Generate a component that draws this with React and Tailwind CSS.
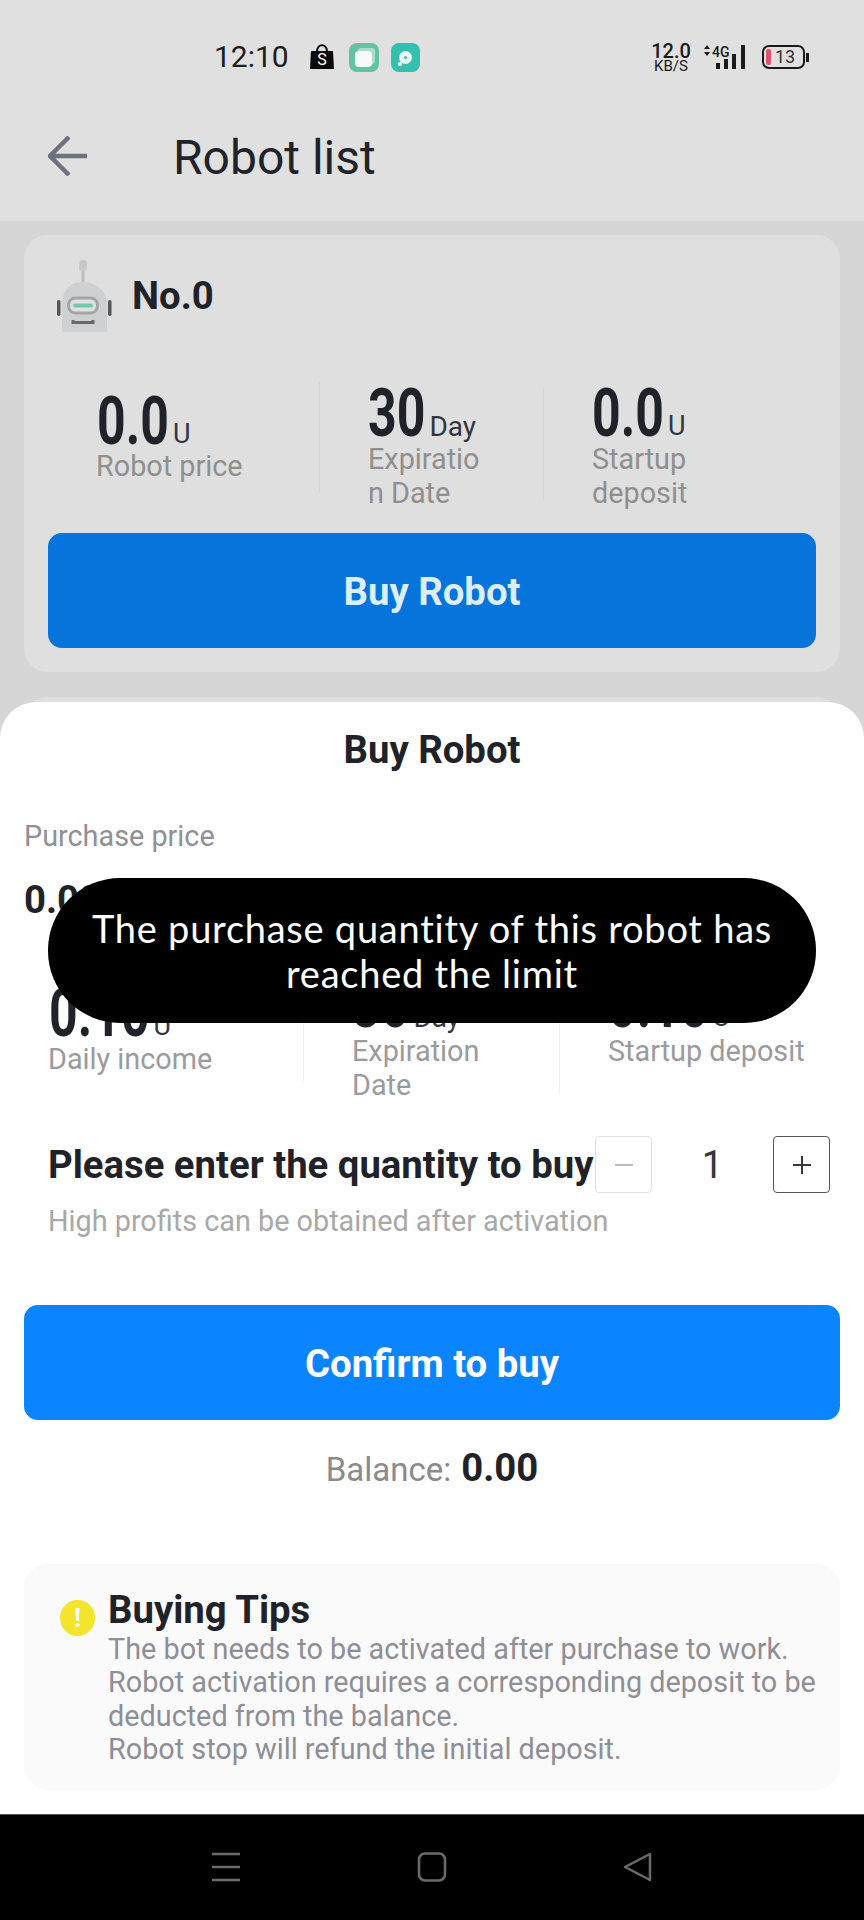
import React from "react";

function BigNum({ value, unit, unitSize = "text-[27px]" }) {
  return (
    <div className="flex items-end h-[48px]">
      <span className="inline-block text-[50px] leading-[48px] font-bold text-[#1f2228] scale-y-[1.35]">{value}</span>
      <span className={`${unitSize} leading-[25px] text-[#33363c] ml-[4px] mb-[-2px]`}>{unit}</span>
    </div>
  );
}

function RobotIcon() {
  return (
    <svg width="58" height="74" viewBox="0 0 58 74" fill="none">
      <rect x="26.5" y="6" width="3" height="18" fill="#bcbdbf" />
      <rect x="24" y="0" width="8" height="11" rx="4" fill="#c6c7c9" />
      <path d="M7 72V44C7 30 16 22 28 22C40 22 52 30 52 44V72Z" fill="#cfd0d2" />
      <rect x="2" y="40" width="3.5" height="16" rx="1.7" fill="#55565a" />
      <rect x="53" y="40" width="3.5" height="16" rx="1.7" fill="#55565a" />
      <rect x="13.5" y="38" width="29" height="15" rx="7" fill="#dfe0e0" stroke="#a4a5a8" strokeWidth="3" />
      <rect x="18" y="43.5" width="20" height="4" rx="2" fill="#74c7ab" />
      <path d="M18 60V62.5H38V60" stroke="#67686c" strokeWidth="3" />
    </svg>
  );
}

function Status() {
  return (
    <div className="h-[114px] flex items-center pl-[214px] pr-[55px]">
      <span className="text-[30px] leading-none text-[#1c1c1c] w-[96px]">12:10</span>
      <div className="relative w-[24px] h-[26px] mr-[15px]">
        <svg width="24" height="26" viewBox="0 0 24 26">
          <path d="M7 8C7 -1 17 -1 17 8" stroke="#0a0a0a" strokeWidth="2" fill="none" />
          <path d="M1 7H23L24 25H0Z" fill="#0a0a0a" />
        </svg>
        <span className="absolute left-0 right-0 top-[8px] text-center text-[16px] leading-[16px] text-white">S</span>
      </div>
      <div className="relative w-[30px] h-[29px] rounded-[8px] bg-[#66c2a5] flex items-center justify-center mr-[12px]">
        <div className="absolute left-[9px] top-[5px] w-[17px] h-[16px] rounded-[3px] bg-[#a9e0cc]" />
        <div className="absolute left-[6px] top-[8px] w-[17px] h-[16px] rounded-[4px] bg-[#f4fbf8]" />
      </div>
      <div className="relative w-[29px] h-[29px] rounded-[8px] bg-[#35bfae] flex items-center justify-center">
        <div className="w-[13px] h-[13px] rounded-full bg-[#e8f8f5] flex items-center justify-center">
          <div className="w-[3px] h-[3px] rounded-full bg-[#35bfae]" />
        </div>
        <div className="absolute left-[7px] top-[19px] w-[4px] h-[4px] rounded-full bg-white" />
      </div>
      <div className="ml-auto flex items-center">
        <div className="flex flex-col items-center w-[36px] mr-[12px] text-[#1a1a1a]">
          <span className="text-[20px] leading-[18px] font-medium">12.0</span>
          <span className="text-[15px] leading-[13px]">KB/S</span>
        </div>
        <svg width="46" height="26" viewBox="0 0 46 26" className="mr-[15px]">
          <path d="M3 5L6 1L9 5ZM3 8L6 12L9 8Z" fill="#1a1a1a" />
          <text x="11" y="13" fontSize="14" fontWeight="500" fill="#1a1a1a" fontFamily="Roboto, sans-serif">4G</text>
          <rect x="15" y="19" width="4" height="6" fill="#1a1a1a" />
          <rect x="23" y="15" width="4" height="10" fill="#1a1a1a" />
          <rect x="31" y="10" width="4" height="15" fill="#1a1a1a" />
          <rect x="40" y="1" width="4" height="24" fill="#1a1a1a" />
        </svg>
        <div className="flex items-center">
          <div className="w-[43px] h-[24px] rounded-[7px] border-[2px] border-[#1a1a1a] flex items-center pl-[2px]">
            <div className="w-[5px] h-[16px] rounded-[2px] bg-[#e0516d]" />
            <span className="text-[18px] leading-none text-[#333] ml-[4px]">13</span>
          </div>
          <div className="w-[3px] h-[9px] bg-[#1a1a1a] ml-[1px]" />
        </div>
      </div>
    </div>
  );
}

function Toast() {
  return (
    <div className="absolute left-[48px] top-[878px] w-[768px] h-[145px] rounded-[72px] bg-black flex items-center justify-center text-center">
      <p className="text-white text-[38px] leading-[45px] font-normal tracking-[0.75px] whitespace-nowrap font-['Lato',sans-serif]">
        The purchase quantity of this robot has<br />reached the limit
      </p>
    </div>
  );
}

export default function App() {
  return (
    <div className="relative w-[864px] h-[1920px] overflow-hidden bg-[#d6d6d6] font-['Roboto',sans-serif]">
      <div className="bg-[#e0e0e0] h-[221px]">
        <Status />
        <div className="h-[84px] flex items-center pl-[48px]">
          <svg width="40" height="40" viewBox="0 0 40 40" fill="none" stroke="#6d727c" strokeWidth="4.5">
            <path d="M39 20H2M21 1L2 20L21 39" />
          </svg>
          <span className="ml-[85px] mt-[3px] text-[48px] leading-none text-[#202329]">Robot list</span>
        </div>
      </div>

      <div className="mx-[24px] mt-[14px] h-[437px] rounded-[24px] bg-[#dfdfdf] pt-[25px]">
        <div className="h-[72px] flex pl-[31px]">
          <RobotIcon />
          <span className="ml-[19px] mt-[14px] text-[38.3px] leading-[44px] font-bold text-[#1f2228]">No.0</span>
        </div>
        <div className="mt-[50px] h-[151px] flex text-[28.8px] leading-[34px] text-[#8f8f8f]">
          <div className="w-[222px] ml-[73px] pt-[15px]">
            <BigNum value="0.0" unit="U" />
            <div className="mt-[4px] ml-[-1px]">Robot price</div>
          </div>
          <div className="w-px h-[111px] bg-[#d6d6d6]" />
          <div className="w-[223px] pl-[48px] pt-[7px]">
            <BigNum value="30" unit="Day" unitSize="text-[28px]" />
            <div className="mt-[5px] w-[115px] break-all">Expiration Date</div>
          </div>
          <div className="w-px h-[112px] mt-[6px] bg-[#d6d6d6]" />
          <div className="pl-[48px] pt-[7px]">
            <BigNum value="0.0" unit="U" />
            <div className="mt-[5px] w-[110px]">Startup deposit</div>
          </div>
        </div>
        <div className="mx-[24px] h-[115px] pt-[2px] rounded-[14px] bg-[#0774dc] flex items-center justify-center text-[38.3px] font-bold text-[#dcedfb]">
          Buy Robot
        </div>
      </div>

      <div className="mx-[24px] mt-[25px] h-[60px] rounded-t-[24px] bg-[#dfdfdf]" />

      <div className="absolute left-0 top-[702px] w-[864px] h-[1112px] rounded-t-[36px] bg-white pt-[27px]">
        <div className="text-center text-[38.3px] leading-[42px] font-bold text-[#1f2329]">Buy Robot</div>
        <div className="mt-[48px] pl-[24px] text-[28.8px] leading-[34px] text-[#8f9097]">Purchase price</div>
        <div className="mt-[26px] pl-[24px] text-[38.3px] leading-[42px] font-bold text-[#1f2329]">0.00</div>

        <div className="mt-[51px] h-[164px] flex text-[28.8px] leading-[34px] text-[#9a9a9f]">
          <div className="w-[254px] ml-[49px] pt-[17px]">
            <BigNum value="0.10" unit="U" />
            <div className="mt-[5px] ml-[-1px]">Daily income</div>
          </div>
          <div className="w-px h-[111px] bg-[#eeeeee]" />
          <div className="w-[255px] pl-[48px] pt-[8px]">
            <BigNum value="30" unit="Day" unitSize="text-[28px]" />
            <div className="mt-[6px] w-[150px]">Expiration Date</div>
          </div>
          <div className="w-px h-[115px] mt-[6px] bg-[#eeeeee]" />
          <div className="pl-[48px] pt-[8px]">
            <BigNum value="0.10" unit="U" />
            <div className="mt-[6px] whitespace-nowrap">Startup deposit</div>
          </div>
        </div>

        <div className="flex items-center h-[57px] pl-[48px]">
          <span className="w-[547px] text-[38.3px] leading-[42px] font-bold text-[#1f2329] whitespace-nowrap">Please enter the quantity to buy</span>
          <div className="w-[57px] h-[57px] rounded-[4px] border border-[#e2e2e2] flex items-center justify-center">
            <svg width="18" height="18" viewBox="0 0 18 18" stroke="#bdbdbd" strokeWidth="2"><path d="M0 9H18" /></svg>
          </div>
          <div className="w-[121px] text-center text-[38px] leading-[42px] text-[#33363c]">1</div>
          <div className="w-[57px] h-[57px] rounded-[4px] border border-[#555555] flex items-center justify-center">
            <svg width="18" height="18" viewBox="0 0 18 18" stroke="#33363c" strokeWidth="2"><path d="M0 9H18M9 0V18" /></svg>
          </div>
        </div>
        <div className="mt-[11px] pl-[48px] text-[28.8px] leading-[34px] text-[#a8a8a8]">High profits can be obtained after activation</div>

        <div className="mt-[67px] mx-[24px] h-[115px] pt-[2px] rounded-[14px] bg-[#0a84ff] flex items-center justify-center text-[38.3px] font-bold text-white">
          Confirm to buy
        </div>

        <div className="mt-[27px] text-center text-[38.3px] leading-[42px] font-bold text-[#1f2329]">
          <span className="text-[33px] font-normal text-[#8a8a8f] mr-[10px]">Balance:</span>0.00
        </div>

        <div className="mt-[73px] mx-[24px] h-[226px] rounded-[24px] bg-[#fafafa] pt-[25px] pl-[36px] flex">
          <div className="mt-[11px] w-[35px] h-[36px] rounded-full bg-[#f3e52c] flex items-center justify-center text-[26px] leading-none font-bold text-white shrink-0">!</div>
          <div className="ml-[13px]">
            <div className="text-[38.3px] leading-[42px] font-bold text-[#1f2329]">Buying Tips</div>
            <div className="mt-[2px] text-[28.8px] leading-[33.4px] text-[#8e8e98] whitespace-nowrap">
              The bot needs to be activated after purchase to work.<br />
              Robot activation requires a corresponding deposit to be<br />
              deducted from the balance.<br />
              Robot stop will refund the initial deposit.
            </div>
          </div>
        </div>
      </div>

      <Toast />

      <div className="absolute left-0 top-[1814px] w-[864px] h-[106px] bg-black border-t border-[#555555] flex items-start pt-[37px] pl-[211px]">
        <svg width="30" height="30" viewBox="0 0 30 30" fill="none" stroke="#6b6b6b" strokeWidth="2.5">
          <path d="M1 2H29M1 15H29M1 28H29" />
        </svg>
        <svg width="30" height="30" viewBox="0 0 30 30" fill="none" stroke="#6b6b6b" strokeWidth="2.5" className="ml-[176px]">
          <rect x="2" y="1.5" width="26" height="27" rx="6" />
        </svg>
        <svg width="30" height="30" viewBox="0 0 30 30" fill="none" stroke="#6b6b6b" strokeWidth="2.5" strokeLinejoin="round" className="ml-[176px]">
          <path d="M27 2V28L2 15Z" />
        </svg>
      </div>
    </div>
  );
}
